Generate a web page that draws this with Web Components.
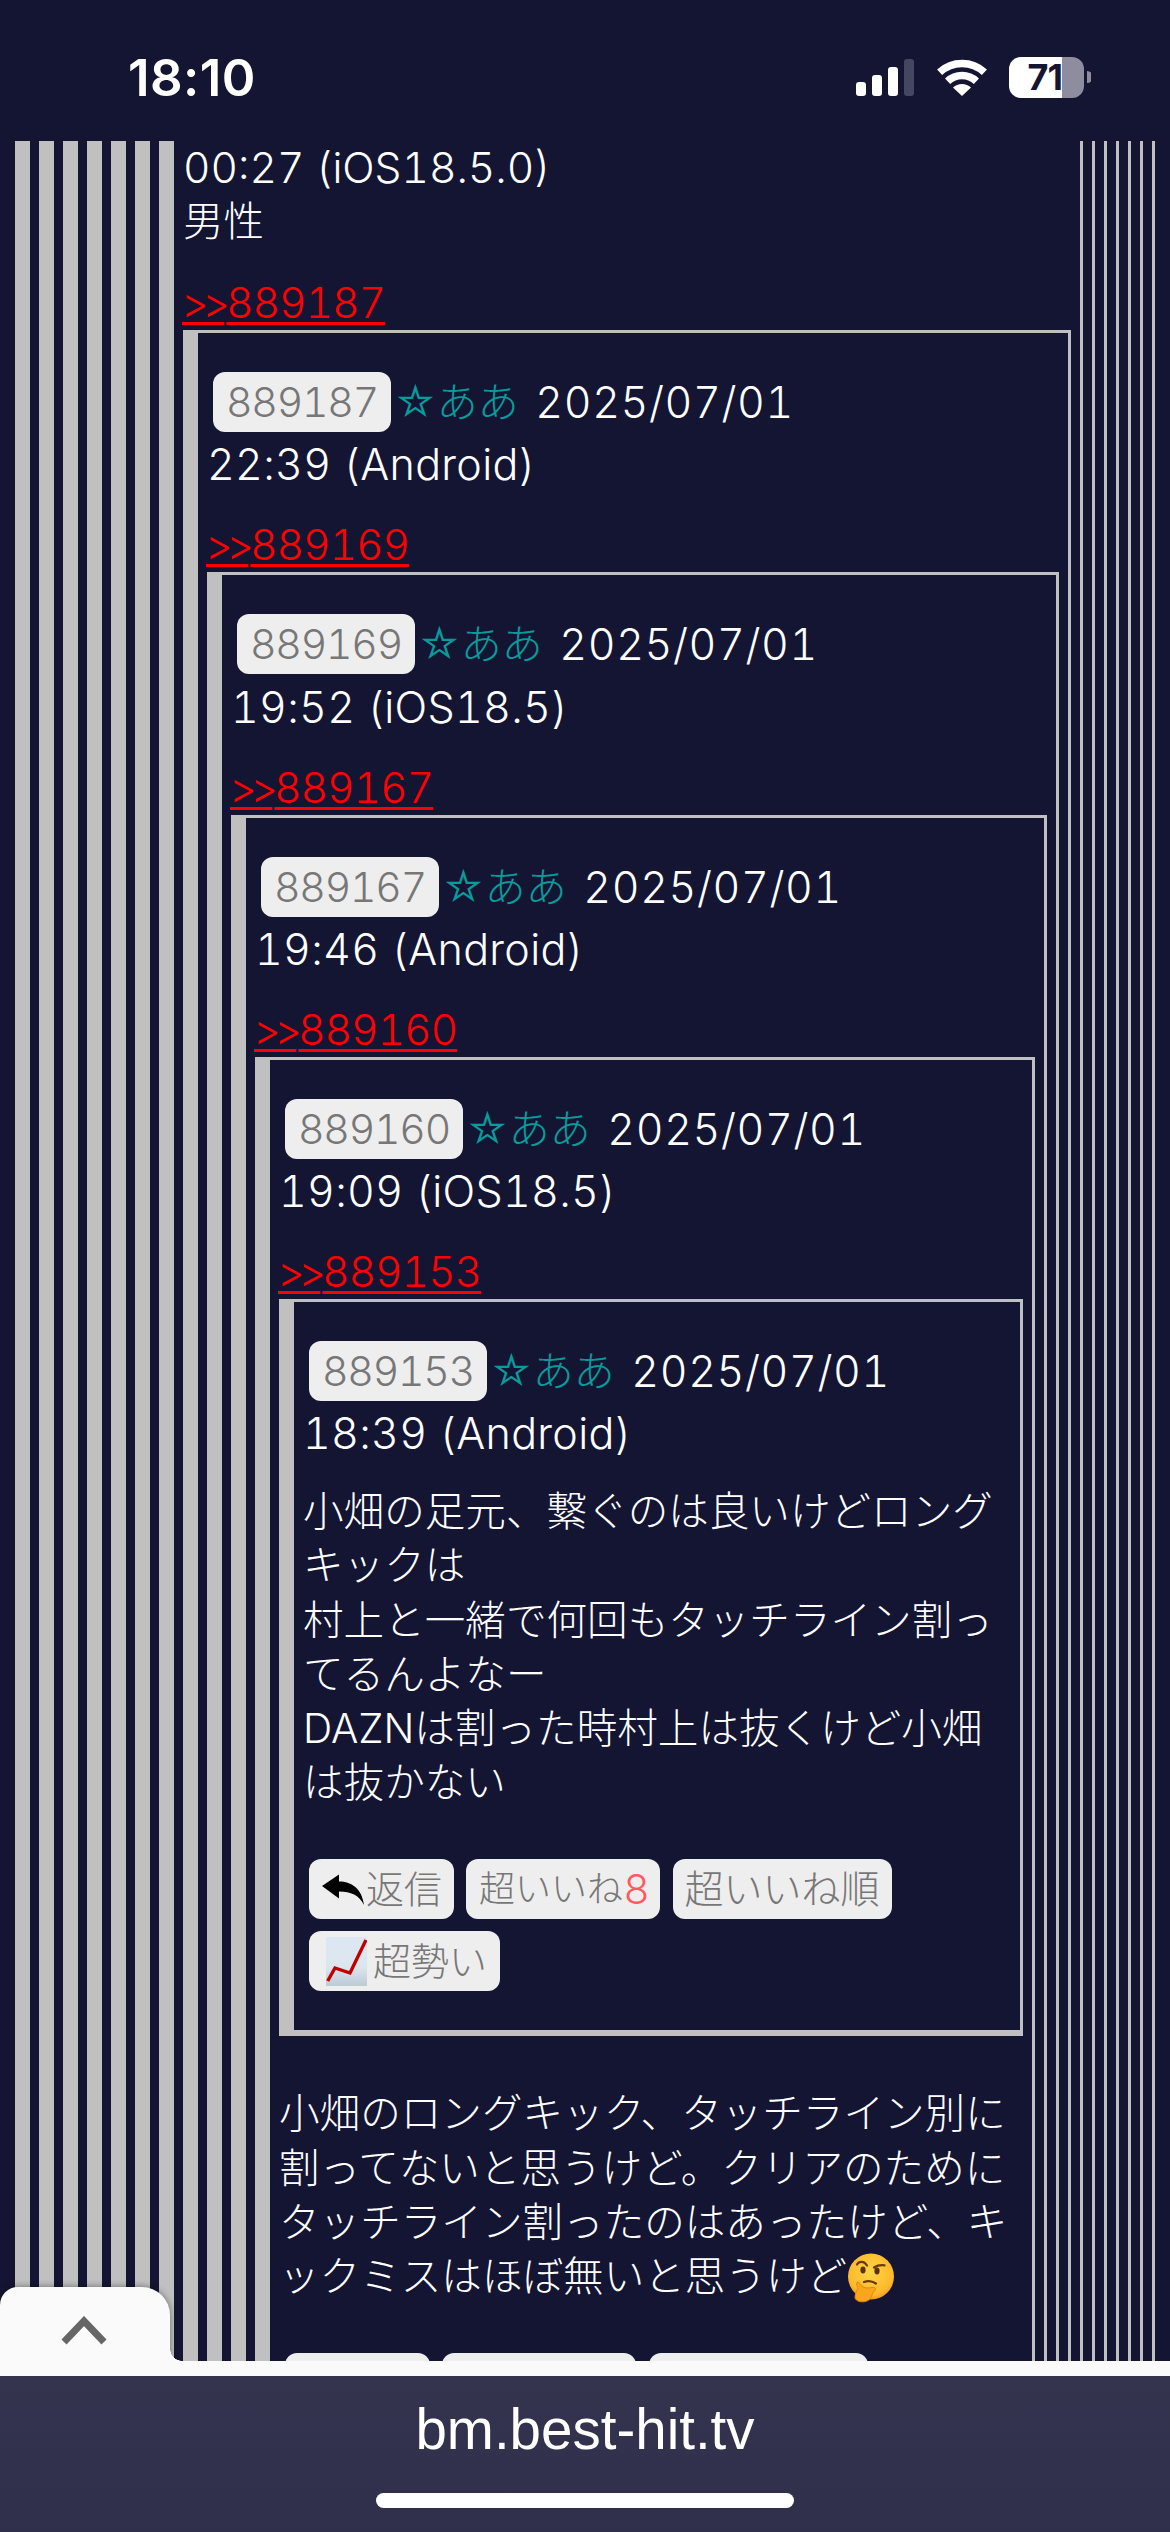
<!DOCTYPE html>
<html lang="ja">
<head>
<meta charset="utf-8">
<title>bm.best-hit.tv</title>
<style>
html,body{margin:0;padding:0;background:#141533;}
body{font-family:Inter,"Noto Sans CJK JP",sans-serif;font-weight:300;font-size:40.6px;line-height:54px;color:#fff;}
</style>
</head>
<body>
<bm-shell>
  <bm-status slot="status"></bm-status>
  <bm-frame><bm-frame><bm-frame><bm-frame><bm-frame><bm-frame><bm-frame>
    <bm-line>00:27 (iOS18.5.0)</bm-line>
    <bm-line cjk>男性</bm-line>
    <bm-ref to="889187"></bm-ref>
    <bm-post no="889187" date="2025/07/01" time="22:39 (Android)">
      <bm-ref to="889169"></bm-ref>
      <bm-post no="889169" date="2025/07/01" time="19:52 (iOS18.5)">
        <bm-ref to="889167"></bm-ref>
        <bm-post no="889167" date="2025/07/01" time="19:46 (Android)">
          <bm-ref to="889160"></bm-ref>
          <bm-post no="889160" date="2025/07/01" time="19:09 (iOS18.5)">
            <bm-ref to="889153"></bm-ref>
            <bm-post no="889153" date="2025/07/01" time="18:39 (Android)" class="leaf">
              <bm-body top="25">小畑の足元、繋ぐのは良いけどロングキックは<br>村上と一緒で何回もタッチライン割ってるんよなー<br>DAZNは割った時村上は抜くけど小畑は抜かない</bm-body>
              <bm-actions likes="8" bottom="39"></bm-actions>
            </bm-post>
            <bm-body top="51">小畑のロングキック、タッチライン別に割ってないと思うけど。クリアのためにタッチライン割ったのはあったけど、キックミスはほぼ無いと思うけど<bm-thinking></bm-thinking></bm-body>
            <bm-actions likes="5" bottom="39"></bm-actions>
          </bm-post>
        </bm-post>
      </bm-post>
    </bm-post>
  </bm-frame></bm-frame></bm-frame></bm-frame></bm-frame></bm-frame></bm-frame>
  <bm-scroll-tab slot="overlay"></bm-scroll-tab>
  <bm-urlbar slot="bottom">bm.best-hit.tv</bm-urlbar>
</bm-shell>

<script>
function def(name, html, setup){
  customElements.define(name, class extends HTMLElement{
    connectedCallback(){
      if(this.shadowRoot) return;
      const r=this.attachShadow({mode:'open'});
      r.innerHTML=html;
      if(setup) setup.call(this,r);
    }
  });
}

def('bm-shell',`<style>
:host{display:flex;flex-direction:column;width:1170px;height:2532px;overflow:hidden;background:#141533;}
.main{position:relative;flex:1;min-height:0;overflow:hidden;}
.scroll{height:100%;overflow:hidden;padding:0 15px;box-sizing:border-box;}
</style>
<slot name="status"></slot>
<div class="main"><div class="scroll"><slot></slot></div><slot name="overlay"></slot></div>
<slot name="bottom"></slot>`);

def('bm-status',`<style>
:host{display:flex;height:141px;box-sizing:border-box;padding:0 79px 0 128px;color:#fff;justify-content:space-between;align-items:flex-start;}
.t{font:600 51px/47px Inter,sans-serif;margin-top:54px;letter-spacing:.4px;}
.r{display:flex;align-items:flex-start;margin-top:57px;}
svg{display:block;}
.sig{margin-top:2px;}
.wifi{margin-left:23px;margin-top:2px;}
.bat{position:relative;margin-left:22px;width:75px;height:41px;border-radius:12px;background:linear-gradient(90deg,#fff 53px,#8e8d9f 53px);color:#141533;font:700 36px/41px Inter,sans-serif;letter-spacing:-1px;}
.bat span{display:block;width:53px;text-align:right;white-space:nowrap;}
.nub{margin-left:3px;margin-top:14px;}
</style>
<div class="t">18:10</div>
<div class="r">
<svg class="sig" width="58" height="37" viewBox="0 0 58 37"><rect x="0" y="23" width="10" height="14" rx="3" fill="#fff"/><rect x="16" y="16" width="10" height="21" rx="3" fill="#fff"/><rect x="32" y="8" width="10" height="29" rx="3" fill="#fff"/><rect x="48" y="0" width="10" height="37" rx="3" fill="#45465f"/></svg>
<svg class="wifi" width="50" height="37" viewBox="0 0 50 37"><g fill="none" stroke="#fff" stroke-width="7.5"><path d="M2.6 13.2A33 33 0 0 1 47.4 13.2"/><path d="M10.6 22.2A21 21 0 0 1 39.4 22.2"/></g><path d="M25 37L16 28.6A13 13 0 0 1 34 28.6Z" fill="#fff"/></svg>
<div class="bat"><span>71</span></div>
<svg class="nub" width="4" height="12" viewBox="0 0 4 12"><path d="M0 0A6 6 0 0 1 0 12Z" fill="#8e8d9f"/></svg>
</div>`);

def('bm-frame',`<style>
:host{display:block;border-style:solid;border-color:#c0c0c0;border-width:0 3px 6px 15px;padding:0 9px;}
</style><slot></slot>`);

def('bm-line',`<style>
:host{display:block;height:54px;line-height:54px;white-space:nowrap;font-size:42.5px;font-variant-numeric:tabular-nums;}
:host([cjk]){font-size:40.6px;}
</style><slot></slot>`);

def('bm-ref',`<style>
:host{display:block;height:54px;line-height:54px;margin-top:27px;color:#f00;white-space:nowrap;font-size:42px;font-variant-numeric:tabular-nums;}
a{color:inherit;text-decoration:underline;text-decoration-thickness:3px;text-underline-offset:4px;letter-spacing:-.7px;}
.g{letter-spacing:-6px;margin-right:2px;margin-left:-1px;}
</style><a><span class="g">&gt;&gt;</span><span class="n"></span></a>`,function(r){
  r.querySelector('.n').textContent=this.getAttribute('to');
});

def('bm-post',`<style>
:host{display:block;border-style:solid;border-color:#c0c0c0;border-width:3px 3px 6px 15px;padding:0 9px;}
.head{display:flex;align-items:center;height:60px;margin-top:39px;margin-bottom:5.25px;white-space:nowrap;}
.badge{display:block;width:178px;box-sizing:border-box;text-align:center;height:60px;line-height:60px;margin-left:6px;background:#eee;color:#777;border-radius:12px;font-size:41px;letter-spacing:-1.2px;font-variant-numeric:tabular-nums;}
.name{margin-left:3px;color:#089b9b;font-size:41px;}
.date{margin-left:16.5px;font-size:43px;font-variant-numeric:tabular-nums;letter-spacing:.6px;}
.time{height:54px;line-height:54px;white-space:nowrap;font-size:43px;font-variant-numeric:tabular-nums;letter-spacing:.3px;}
</style>
<div class="head"><span class="badge"></span><span class="name">☆ああ</span><span class="date"></span></div>
<div class="time"></div>
<slot></slot>`,function(r){
  r.querySelector('.badge').textContent=this.getAttribute('no');
  r.querySelector('.date').textContent=this.getAttribute('date');
  r.querySelector('.time').textContent=this.getAttribute('time');
});

def('bm-body',`<style>
:host{display:block;line-height:54.2px;}
</style><slot></slot>`,function(){
  this.style.marginTop=this.getAttribute('top')+'px';
});

def('bm-actions',`<style>
:host{display:flex;flex-wrap:wrap;gap:12px 12.5px;padding-left:6px;margin-top:49px;}
.b{display:flex;align-items:center;height:60px;box-sizing:border-box;background:#eee;color:#777;border-radius:12px;white-space:nowrap;line-height:60px;}
.red{color:#ff5a60;font-size:41px;margin-left:1px;}
svg{display:block;flex:none;}
.b1{width:144.5px;padding-left:13px;font-size:38px;}
.b1 svg{margin-right:2px;filter:blur(.5px);}
.b2{width:194px;padding-left:13px;font-size:36px;}
.b3{width:219px;padding-left:12px;font-size:39px;}
.b4{width:191px;padding-left:17px;font-size:38px;}
.b4 svg{margin-right:6px;}
</style>
<div class="b b1"><svg width="42" height="31" viewBox="0 0 42 31"><path d="M0 12L17 0.5V7.5C30 7.5 40 15 42 31C37 21 29 17.5 17 17.5V24.5Z" fill="#000"/></svg><span>返信</span></div>
<div class="b b2"><span>超いいね</span><span class="red"></span></div>
<div class="b b3"><span>超いいね順</span></div>
<div class="b b4"><svg width="41" height="49" viewBox="0 0 41 49"><defs><linearGradient id="g" x1="0" y1="0" x2="0" y2="1"><stop offset="0" stop-color="#dbe7f2"/><stop offset=".6" stop-color="#dce6ee"/><stop offset="1" stop-color="#bccbd8"/></linearGradient></defs><rect width="41" height="49" fill="url(#g)"/><path d="M1.7 44L9 31L24 36L40 3" fill="none" stroke="#c00000" stroke-width="3.4"/></svg><span>超勢い</span></div>`,function(r){
  r.querySelector('.red').textContent=this.getAttribute('likes');
  this.style.paddingBottom=this.getAttribute('bottom')+'px';
});

def('bm-thinking',`<style>
:host{display:inline-block;width:48px;height:50px;vertical-align:-12px;}
svg{display:block;}
</style>
<svg width="48" height="50" viewBox="0 0 48 50" role="img" aria-label="🤔"><defs><radialGradient id="f" cx=".5" cy=".4" r=".65"><stop offset="0" stop-color="#ffd545"/><stop offset=".75" stop-color="#fdb92c"/><stop offset="1" stop-color="#ef8f12"/></radialGradient></defs>
<circle cx="24" cy="23.5" r="23" fill="url(#f)"/>
<path d="M10 11.5C12 8 17 7.500 20 12.500" fill="none" stroke="#6a3a08" stroke-width="2.200" stroke-linecap="round"/>
<path d="M27 14.500C30 12.500 34 12 37.500 12.300" fill="none" stroke="#6a3a08" stroke-width="2.200" stroke-linecap="round"/>
<ellipse cx="16" cy="17" rx="2.600" ry="3.400" fill="#5a3208"/><ellipse cx="30" cy="18" rx="2.600" ry="3.400" fill="#5a3208"/>
<path d="M17 29C21 27.500 26 28.500 29 30.500" fill="none" stroke="#6a3a08" stroke-width="2.200" stroke-linecap="round"/>
<path d="M10 29.500C9 31 10 33.500 11 35C9 38 8 42 8 45C9 48 14 49.500 18 48.500C21 48 24 46 24.500 43C26 40 26 38.500 28.500 37C29 35 27 34 25 34.500C21 35.500 17 35 15 33C13.500 31 11.500 28.500 10 29.500Z" fill="#f9a61c" stroke="#e08a10" stroke-width="1"/>
</svg>`);

def('bm-scroll-tab',`<style>
:host{position:absolute;left:0;bottom:0;display:block;width:170px;height:74px;background:#fafafa;border-radius:18px 28px 0 0;box-shadow:0 0 7px rgba(0,0,0,.45);}
svg{position:absolute;left:60px;top:29px;}
.flare{position:absolute;left:170px;bottom:0;width:12px;height:12px;background:radial-gradient(circle at 100% 0,transparent 11.5px,#fafafa 12px);}
</style>
<svg width="48" height="30" viewBox="0 0 48 30"><path d="M4 26L24 5L44 26" fill="none" stroke="#666" stroke-width="7"/></svg><div class="flare"></div>`);

def('bm-urlbar',`<style>
:host{display:block;flex:none;height:171px;box-sizing:border-box;border-top:15px solid #fafafa;background:linear-gradient(#34344f,#2f2f4c);color:#fff;}
.u{font:400 56.5px/64px "Liberation Sans",sans-serif;text-align:center;padding-top:22px;height:117px;box-sizing:border-box;}
.h{width:418px;height:15px;border-radius:8px;background:#fff;margin:0 auto;}
</style><div class="u"><slot></slot></div><div class="h"></div>`);
</script>
</body>
</html>
